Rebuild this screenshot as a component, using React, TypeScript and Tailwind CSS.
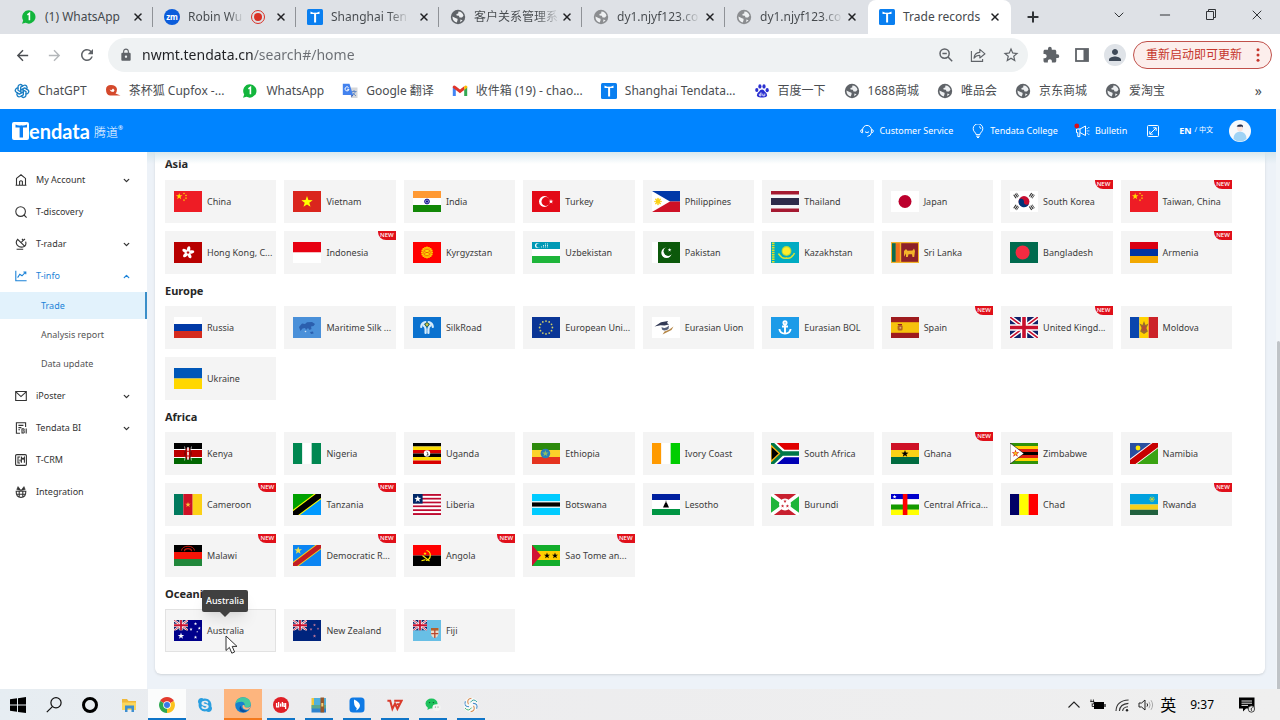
import type { ReactNode } from "react";
import clsx from "clsx";
import { ChevronDown, ChevronUp, Minus, Plus, X } from "lucide-react";
import {
  MdArrowBack,
  MdArrowForward,
  MdExtension,
  MdLock,
  MdPerson,
  MdRefresh,
  MdStarBorder,
} from "react-icons/md";
import { FaSkype } from "react-icons/fa";
import { TbBrandOpenai } from "react-icons/tb";

/* ---------- flags, all drawn on a 28x21 canvas ---------- */

function rows(...colors: string[]) {
  const h = 21 / colors.length;
  return colors.map((c, i) => (
    <rect key={i} y={i * h} width="28" height={h} fill={c} />
  ));
}

function cols(...colors: string[]) {
  const w = 28 / colors.length;
  return colors.map((c, i) => (
    <rect key={i} x={i * w} width={w} height="21" fill={c} />
  ));
}

function Star({ x, y, r, fill }: { x: number; y: number; r: number; fill: string }) {
  const points = Array.from({ length: 10 }, (_, i) => {
    const a = (Math.PI / 5) * i - Math.PI / 2;
    const d = i % 2 ? r * 0.4 : r;
    return `${x + d * Math.cos(a)},${y + d * Math.sin(a)}`;
  }).join(" ");
  return <polygon points={points} fill={fill} />;
}

function Ring({ x, y, r, n, dot, fill }: { x: number; y: number; r: number; n: number; dot: number; fill: string }) {
  return (
    <>
      {Array.from({ length: n }, (_, i) => {
        const a = (Math.PI * 2 * i) / n;
        return (
          <circle key={i} cx={x + r * Math.cos(a)} cy={y + r * Math.sin(a)} r={dot} fill={fill} />
        );
      })}
    </>
  );
}

function Jack() {
  return (
    <>
      <rect width="28" height="21" fill="#0f2168" />
      <path d="M0 0L28 21M28 0L0 21" stroke="#fff" strokeWidth="4.4" />
      <path d="M0 0L28 21M28 0L0 21" stroke="#c8102e" strokeWidth="1.6" />
      <path d="M14 0V21M0 10.5H28" stroke="#fff" strokeWidth="6.4" />
      <path d="M14 0V21M0 10.5H28" stroke="#c8102e" strokeWidth="3.6" />
    </>
  );
}

const smallJack = (
  <svg width="14" height="10.5" viewBox="0 0 28 21">
    <Jack />
  </svg>
);

const chinaFlag = (
  <>
    <rect width="28" height="21" fill="#ee1c25" />
    <Star x={5.2} y={5.4} r={3.4} fill="#ffde00" />
    <Star x={10} y={2.4} r={1.2} fill="#ffde00" />
    <Star x={12} y={4.4} r={1.2} fill="#ffde00" />
    <Star x={12} y={7.2} r={1.2} fill="#ffde00" />
    <Star x={10} y={9.2} r={1.2} fill="#ffde00" />
  </>
);

const flags: Record<string, ReactNode> = {
  cn: chinaFlag,
  vn: (
    <>
      {rows("#da251d")}
      <Star x={14} y={11} r={6} fill="#ff0" />
    </>
  ),
  in: (
    <>
      {rows("#ff9933", "#fff", "#128807")}
      <circle cx="14" cy="10.5" r="2.4" fill="#9a9ad2" stroke="#000088" strokeWidth="0.9" />
      <circle cx="14" cy="10.5" r="1" fill="#000088" />
    </>
  ),
  tr: (
    <>
      {rows("#e30a17")}
      <circle cx="12.4" cy="10.5" r="5.4" fill="#fff" />
      <circle cx="13.9" cy="10.5" r="4.4" fill="#e30a17" />
      <Star x={19} y={10.5} r={2.5} fill="#fff" />
    </>
  ),
  ph: (
    <>
      {rows("#0038a8", "#ce1126")}
      <path d="M0 0L18 10.5L0 21Z" fill="#fff" />
      <Ring x={6} y={10.5} r={3} n={8} dot={0.8} fill="#fcd116" />
      <circle cx="6" cy="10.5" r="2.4" fill="#fcd116" />
    </>
  ),
  th: (
    <>
      <rect width="28" height="21" fill="#a51931" />
      <rect y="3.5" width="28" height="14" fill="#f4f5f8" />
      <rect y="7" width="28" height="7" fill="#2d2a4a" />
    </>
  ),
  jp: (
    <>
      {rows("#fff")}
      <circle cx="14" cy="10.5" r="6.5" fill="#bc002d" />
    </>
  ),
  kr: (
    <>
      {rows("#fff")}
      <circle cx="14" cy="10.5" r="5.4" fill="#c60c30" />
      <path d="M8.7 9.6A5.4 5.4 0 1 0 19.3 11.6A2.7 2.7 0 0 1 14 10.5A2.7 2.7 0 0 0 8.7 9.6Z" fill="#003478" />
      <g stroke="#333" strokeWidth="4.2" strokeDasharray="1.2 0.6">
        <path d="M4.4 5.8L8 3.4" />
        <path d="M20 17.6L23.6 15.2" />
        <path d="M20 3.4L23.6 5.8" />
        <path d="M4.4 15.2L8 17.6" />
      </g>
    </>
  ),
  hk: (
    <>
      {rows("#b80000")}
      {[0, 72, 144, 216, 288].map((a) => (
        <ellipse key={a} cx="14" cy="7.3" rx="1.7" ry="3.1" fill="#fff" transform={`rotate(${a + 10} 14 10.5)`} />
      ))}
      <Star x={14} y={10.5} r={2} fill="#b80000" />
    </>
  ),
  id: rows("#e70011", "#fff"),
  kg: (
    <>
      {rows("#ff0000")}
      <Ring x={14} y={10.5} r={5} n={16} dot={1} fill="#ffd400" />
      <circle cx="14" cy="10.5" r="4.6" fill="#ffb400" />
      <circle cx="14" cy="10.5" r="3.2" fill="#ffd400" stroke="#e33d00" strokeWidth="0.5" />
      <path d="M11.5 9.5Q14 12 16.5 9.5M11.5 11.5Q14 9 16.5 11.5" stroke="#e33d00" strokeWidth="0.5" fill="none" />
    </>
  ),
  uz: (
    <>
      {rows("#0099b5", "#fff", "#1eb53a")}
      <circle cx="5.5" cy="3.5" r="2.5" fill="#fff" />
      <circle cx="6.5" cy="3.5" r="2.2" fill="#0099b5" />
      <path d="M9.5 4.5V6M11.5 3V6M13.5 1.5V6M15.5 1.5V6" stroke="#fff" strokeWidth="0.9" strokeDasharray="0.9 0.6" />
    </>
  ),
  pk: (
    <>
      {rows("#0c590b")}
      <rect width="6" height="21" fill="#fff" />
      <circle cx="14.5" cy="10.7" r="5.2" fill="#fff" />
      <circle cx="16.2" cy="9.3" r="4.6" fill="#0c590b" />
      <Star x={17.6} y={7.9} r={1.9} fill="#fff" />
    </>
  ),
  kz: (
    <>
      {rows("#00abc2")}
      <path d="M2.2 0.5V20.5" stroke="#e8e31a" strokeWidth="2.6" strokeDasharray="1.5 0.8" />
      <circle cx="15.5" cy="9" r="4.9" fill="#b9d93a" />
      <circle cx="15.5" cy="9" r="3.8" fill="#ffec2d" />
      <path d="M7.5 11.5Q11 17.5 15.5 16Q20 17.5 23.5 11" stroke="#d9e333" strokeWidth="1.5" fill="none" />
    </>
  ),
  lk: (
    <>
      {rows("#f2b32b")}
      <rect x="1" y="1.2" width="3.8" height="18.6" fill="#0b6b50" />
      <rect x="4.8" y="1.2" width="4" height="18.6" fill="#f0701c" />
      <rect x="10.2" y="1.2" width="16.8" height="18.6" fill="#8d2029" />
      <path d="M13 14.8V9L15 7L16.5 8.8L21.5 8.4L23 6.6L24 9L23.2 15H21.5L21 12.2H17.5L16.8 15H15V11.5Z" fill="#f2b32b" />
    </>
  ),
  bd: (
    <>
      {rows("#006a4e")}
      <circle cx="12.6" cy="10.5" r="7" fill="#f42a41" />
    </>
  ),
  am: rows("#d90012", "#0033a0", "#f2a800"),
  ru: rows("#fff", "#0039a6", "#d52b1e"),
  msilk: (
    <>
      {rows("#4a90d9")}
      <path d="M6 10L9 6.5L12 7L14 5.2L19 5L22 7L20.5 9L18 9.5L18.5 12L16.5 13L15 11L13 13L12 11L9.5 11.5L7.5 14Z" fill="#2b5fae" />
      <path d="M17 15L20 14.4L20.6 16.4L18 17Z" fill="#2b5fae" />
      <circle cx="12.5" cy="14.5" r="0.8" fill="#cfe3f7" />
    </>
  ),
  silk: (
    <>
      {rows("#0b72cf")}
      <g fill="none" stroke="#d6ecfb" strokeWidth="2.2" strokeLinecap="round">
        <path d="M12.4 5.2Q8.4 6 8.2 10M15.6 5.2Q19.6 6 19.8 10" />
        <path d="M10.4 8.2Q12.6 9.6 12.6 12V16M17.6 8.2Q15.4 9.6 15.4 12V16" />
      </g>
      <circle cx="14" cy="7.6" r="1.8" fill="#d7c84e" stroke="#2a5d2c" strokeWidth="0.8" />
    </>
  ),
  eu: (
    <>
      {rows("#0a3596")}
      <Ring x={14} y={10.5} r={6.4} n={12} dot={0.9} fill="#cfd06a" />
    </>
  ),
  eau: (
    <>
      {rows("#fff")}
      <path d="M2.5 9.5L9 5.2L16 4L15 6L17 7.5L12.5 8.6L8.5 8.3Z" fill="#333a55" />
      <path d="M9.5 10Q13.5 12.5 17 8.5L16.5 12Q13 14.5 10 12.5Z" fill="#56607a" />
      <path d="M21.5 9.5L19.5 13L14.5 15.5L10.5 17.6L12.5 14.6L17 12.8Z" fill="#b58748" />
    </>
  ),
  bol: (
    <>
      {rows("#1c9be8")}
      <g stroke="#fff" strokeWidth="1.9" fill="none">
        <circle cx="14" cy="5.8" r="1.6" />
        <path d="M14 7.5V16.5M11 9.5H17M8.4 12Q8.8 16.4 14 16.6Q19.2 16.4 19.6 12" />
      </g>
    </>
  ),
  es: (
    <>
      {rows("#9e1b1e")}
      <rect y="5.2" width="28" height="10.6" fill="#f6c20c" />
      <rect x="6.6" y="8" width="5" height="5.6" rx="1.5" fill="#b0621f" />
      <circle cx="9.4" cy="10.8" r="1" fill="#e0a780" />
      <path d="M6.8 7.5H11" stroke="#9e1b1e" strokeWidth="1" />
    </>
  ),
  gb: <Jack />,
  md: (
    <>
      {cols("#0a46ae", "#ffd200", "#cc2229")}
      <path d="M9.5 6.5L11.5 11L10.2 14.5L14 17L17.8 14.5L16.5 11L18.5 6.5L15.5 8L14 4L12.5 8Z" fill="#9c6b2c" />
      <rect x="12.3" y="9" width="3.4" height="4.6" fill="#b5473a" />
    </>
  ),
  ua: rows("#0057b8", "#ffd700"),
  ke: (
    <>
      {rows("#000", "#bb0000", "#006600")}
      <path d="M0 6.5H28M0 14.5H28" stroke="#fff" strokeWidth="1" />
      <path d="M10.5 3.5L12 10.5L10.5 17.5M17.5 3.5L16 10.5L17.5 17.5" stroke="#fff" strokeWidth="0.6" fill="none" />
      <ellipse cx="14" cy="10.5" rx="3" ry="6.3" fill="#bb0000" stroke="#000" strokeWidth="0.5" />
      <path d="M14 4.2V16.8" stroke="#fff" strokeWidth="1.6" strokeDasharray="3.6 1" />
    </>
  ),
  ng: cols("#008751", "#fff", "#008751"),
  ug: (
    <>
      {rows("#000", "#fcdc04", "#d90000", "#000", "#fcdc04", "#d90000")}
      <circle cx="14" cy="10.5" r="3.2" fill="#fff" />
      <path d="M13 8.5L14.5 10.5L13.2 12.8L15.6 12.2L15 9.6Z" fill="#555" />
    </>
  ),
  et: (
    <>
      {rows("#2d8a0c", "#fbd22a", "#e5331e")}
      <circle cx="13.4" cy="10.5" r="4.8" fill="#2b7fb8" />
      <Star x={13.4} y={10.5} r={3.4} fill="#8ebf65" />
    </>
  ),
  ci: cols("#ff9a00", "#fff", "#00cd00"),
  za: (
    <>
      {rows("#e00000", "#0000b5")}
      <path d="M0 0L12 10.5L0 21M11 10.5H28" stroke="#fff" strokeWidth="7.6" fill="none" />
      <path d="M0 0L11 10.5L0 21M11 10.5H28" stroke="#007749" strokeWidth="4.4" fill="none" />
      <path d="M0 2.5L8.5 10.5L0 18.5Z" fill="#000" stroke="#fcb514" strokeWidth="1.3" />
    </>
  ),
  gh: (
    <>
      {rows("#ce1126", "#fcd116", "#006b3f")}
      <Star x={14} y={10.8} r={3.8} fill="#000" />
    </>
  ),
  zw: (
    <>
      {rows("#319208", "#ffd200", "#de2010", "#000", "#de2010", "#ffd200", "#319208")}
      <path d="M0 0L14 10.5L0 21Z" fill="#fff" stroke="#000" strokeWidth="0.6" />
      <Star x={5.5} y={10.5} r={4} fill="#de2010" />
      <circle cx="5.5" cy="10.3" r="1.6" fill="#f3b81f" />
    </>
  ),
  na: (
    <>
      <path d="M0 0H28L0 21Z" fill="#2a4fa0" />
      <path d="M28 0V21H0Z" fill="#3aa312" />
      <path d="M-2 22.5L30 -1.5" stroke="#fff" strokeWidth="8.4" />
      <path d="M-2 22.5L30 -1.5" stroke="#c70000" strokeWidth="6.6" />
      <circle cx="8" cy="5" r="2.4" fill="#ffe700" />
    </>
  ),
  cm: (
    <>
      {cols("#007a5e", "#ce1126", "#fcd116")}
      <Star x={14} y={10.7} r={2.8} fill="#f7c33a" />
    </>
  ),
  tz: (
    <>
      <path d="M0 0H28L0 21Z" fill="#00a000" />
      <path d="M28 0V21H0Z" fill="#0099ff" />
      <path d="M-2 22.5L30 -1.5" stroke="#ff0" strokeWidth="8.4" />
      <path d="M-2 22.5L30 -1.5" stroke="#000" strokeWidth="6.2" />
    </>
  ),
  lr: (
    <>
      {rows("#bf0a30", "#fff", "#bf0a30", "#fff", "#bf0a30", "#fff", "#bf0a30", "#fff", "#bf0a30", "#fff", "#bf0a30")}
      <rect width="9.6" height="9.6" fill="#002868" />
      <Star x={4.8} y={5} r={3.6} fill="#fff" />
    </>
  ),
  bw: (
    <>
      {rows("#00cbff")}
      <rect y="7.2" width="28" height="6.6" fill="#fff" />
      <rect y="8.4" width="28" height="4.2" fill="#000" />
    </>
  ),
  ls: (
    <>
      <rect width="28" height="21" fill="#fff" />
      <rect width="28" height="6" fill="#00209f" />
      <rect y="15" width="28" height="6" fill="#009543" />
      <path d="M14 6L14.5 8.5L15.2 9.4L17 13.4H11L12.8 9.4L13.5 8.5Z" fill="#000" />
    </>
  ),
  bi: (
    <>
      <rect width="28" height="21" fill="#c8202f" />
      <path d="M0 0L14 10.5L0 21ZM28 0L14 10.5L28 21Z" fill="#1eb53a" />
      <path d="M0 0L28 21M28 0L0 21" stroke="#fff" strokeWidth="3.4" />
      <circle cx="14" cy="10.5" r="6" fill="#fff" />
      <Star x={14} y={7.4} r={1.8} fill="#c8202f" />
      <Star x={11.6} y={12} r={1.8} fill="#c8202f" />
      <Star x={16.4} y={12} r={1.8} fill="#c8202f" />
    </>
  ),
  cf: (
    <>
      {rows("#0000cc", "#fff", "#149a00", "#ffff00")}
      <rect x="11.8" width="4.6" height="21" fill="#f00" />
      <Star x={3.6} y={2.8} r={2.1} fill="#fff" />
    </>
  ),
  td: cols("#000066", "#ffff00", "#ff0000"),
  rw: (
    <>
      <rect width="28" height="10.5" fill="#00a1de" />
      <rect y="10.5" width="28" height="5.25" fill="#f5cf1b" />
      <rect y="15.75" width="28" height="5.25" fill="#20603d" />
      <Ring x={22} y={5.2} r={2.2} n={8} dot={0.6} fill="#c9d433" />
      <circle cx="22" cy="5.2" r="1.3" fill="#c9d433" />
    </>
  ),
  mw: (
    <>
      {rows("#000", "#f41408", "#21873b")}
      <path d="M7.5 5.6A6.5 4.4 0 0 1 20.5 5.6" fill="none" stroke="#c8160c" strokeWidth="1" />
      <path d="M10.5 6.2A3.5 2.6 0 0 1 17.5 6.2" fill="none" stroke="#c8160c" strokeWidth="1.3" />
    </>
  ),
  cd: (
    <>
      {rows("#0c85f2")}
      <path d="M-2 22.5L30 -1.5" stroke="#f7d618" strokeWidth="6.8" />
      <path d="M-2 22.5L30 -1.5" stroke="#c21c24" strokeWidth="5" />
      <Star x={5.2} y={5.6} r={4} fill="#f0e04a" />
    </>
  ),
  ao: (
    <>
      {rows("#f00", "#000")}
      <path d="M13.5 5.5A5 5 0 0 1 13 15.3" fill="none" stroke="#ffec00" strokeWidth="1.2" />
      <path d="M9.5 10.5L16.5 16M8.5 15.8L12.5 14.6" stroke="#ffec00" strokeWidth="1.1" />
      <Star x={12} y={8.6} r={1.8} fill="#ffec00" />
    </>
  ),
  st: (
    <>
      <rect width="28" height="21" fill="#12ad2b" />
      <rect y="6" width="28" height="9" fill="#ffce00" />
      <path d="M0 0L9 10.5L0 21Z" fill="#d21034" />
      <Star x={15} y={10.7} r={3.2} fill="#000" />
      <Star x={23} y={10.7} r={3.2} fill="#000" />
    </>
  ),
  au: (
    <>
      {rows("#00008b")}
      {smallJack}
      <Star x={7} y={16} r={3.4} fill="#fff" />
      <Star x={21.5} y={3.8} r={1.7} fill="#fff" />
      <Star x={17} y={9.3} r={1.7} fill="#fff" />
      <Star x={25.3} y={8.2} r={1.7} fill="#fff" />
      <Star x={21.5} y={17.4} r={1.8} fill="#fff" />
      <Star x={23.2} y={11.8} r={1} fill="#fff" />
    </>
  ),
  nz: (
    <>
      {rows("#00247d")}
      {smallJack}
      <Star x={21.5} y={5} r={1.6} fill="#c77a98" />
      <Star x={18} y={9.3} r={1.5} fill="#c77a98" />
      <Star x={25} y={8.6} r={1.4} fill="#c77a98" />
      <Star x={21.5} y={16} r={1.8} fill="#c77a98" />
    </>
  ),
  fj: (
    <>
      {rows("#68bfe5")}
      {smallJack}
      <path d="M18 8H25.5V14Q25 17 21.8 18Q18.5 17 18 14Z" fill="#e9dccb" />
      <path d="M18 8H25.5V10.6H18Z" fill="#b4602f" />
      <path d="M21.8 10V18M18.2 13.6H25.3" stroke="#b9472d" strokeWidth="1.3" />
    </>
  ),
};

/* ---------- country list ---------- */

type Country = { flag: string; name: string; isNew?: boolean };

const regions: { title: string; countries: Country[] }[] = [
  {
    title: "Asia",
    countries: [
      { flag: "cn", name: "China" },
      { flag: "vn", name: "Vietnam" },
      { flag: "in", name: "India" },
      { flag: "tr", name: "Turkey" },
      { flag: "ph", name: "Philippines" },
      { flag: "th", name: "Thailand" },
      { flag: "jp", name: "Japan" },
      { flag: "kr", name: "South Korea", isNew: true },
      { flag: "cn", name: "Taiwan, China", isNew: true },
      { flag: "hk", name: "Hong Kong, C..." },
      { flag: "id", name: "Indonesia", isNew: true },
      { flag: "kg", name: "Kyrgyzstan" },
      { flag: "uz", name: "Uzbekistan" },
      { flag: "pk", name: "Pakistan" },
      { flag: "kz", name: "Kazakhstan" },
      { flag: "lk", name: "Sri Lanka" },
      { flag: "bd", name: "Bangladesh" },
      { flag: "am", name: "Armenia", isNew: true },
    ],
  },
  {
    title: "Europe",
    countries: [
      { flag: "ru", name: "Russia" },
      { flag: "msilk", name: "Maritime Silk ..." },
      { flag: "silk", name: "SilkRoad" },
      { flag: "eu", name: "European Uni..." },
      { flag: "eau", name: "Eurasian Uion" },
      { flag: "bol", name: "Eurasian BOL" },
      { flag: "es", name: "Spain", isNew: true },
      { flag: "gb", name: "United Kingd...", isNew: true },
      { flag: "md", name: "Moldova" },
      { flag: "ua", name: "Ukraine" },
    ],
  },
  {
    title: "Africa",
    countries: [
      { flag: "ke", name: "Kenya" },
      { flag: "ng", name: "Nigeria" },
      { flag: "ug", name: "Uganda" },
      { flag: "et", name: "Ethiopia" },
      { flag: "ci", name: "Ivory Coast" },
      { flag: "za", name: "South Africa" },
      { flag: "gh", name: "Ghana", isNew: true },
      { flag: "zw", name: "Zimbabwe" },
      { flag: "na", name: "Namibia" },
      { flag: "cm", name: "Cameroon", isNew: true },
      { flag: "tz", name: "Tanzania", isNew: true },
      { flag: "lr", name: "Liberia" },
      { flag: "bw", name: "Botswana" },
      { flag: "ls", name: "Lesotho" },
      { flag: "bi", name: "Burundi" },
      { flag: "cf", name: "Central Africa..." },
      { flag: "td", name: "Chad" },
      { flag: "rw", name: "Rwanda", isNew: true },
      { flag: "mw", name: "Malawi", isNew: true },
      { flag: "cd", name: "Democratic R...", isNew: true },
      { flag: "ao", name: "Angola", isNew: true },
      { flag: "st", name: "Sao Tome an...", isNew: true },
    ],
  },
  {
    title: "Oceania",
    countries: [
      { flag: "au", name: "Australia" },
      { flag: "nz", name: "New Zealand" },
      { flag: "fj", name: "Fiji" },
    ],
  },
];

/* ---------- small logos ---------- */

function TLogo() {
  return (
    <svg className="size-4 shrink-0" viewBox="0 0 16 16">
      <rect width="16" height="16" rx="1.5" fill="#0a7ff0" />
      <path d="M3.5 2.6Q6 4.2 8 3.4Q10 4.2 12.5 2.6V5H9.1V13.4H7.1V5H3.5Z" fill="#fff" />
    </svg>
  );
}

function WhatsAppLogo() {
  return (
    <svg className="size-4 shrink-0" viewBox="0 0 16 16">
      <path d="M8 1.2A6.7 6.7 0 1 1 4.6 13.8L1 14.8L2.2 11.4A6.7 6.7 0 0 1 8 1.2Z" fill="#12b53c" />
      <path d="M6.4 5.8L8.4 4.4V11.2" stroke="#fff" strokeWidth="1.6" fill="none" />
    </svg>
  );
}

function ZoomLogo() {
  return (
    <span className="flex size-4 shrink-0 items-center justify-center rounded-full bg-[#0b5cdb] text-[8px] leading-none font-bold text-white">
      zm
    </span>
  );
}

function Globe({ light }: { light?: boolean }) {
  return (
    <svg className={clsx("size-4 shrink-0", light ? "text-[#8b8d90]" : "text-[#5f6368]")} viewBox="0 0 16 16">
      <circle cx="8" cy="8" r="7.2" fill="currentColor" />
      <path
        d="M2.4 7.4L6 9.2Q8.2 9.4 7.6 11L6.8 13.6Q2.6 12.4 2.4 7.4ZM8.4 2.4Q12.6 2.6 13.5 6.8L12 8.6L9.6 8.4L8.8 6.8L6.6 6.6L6.4 5L8.2 4.4ZM10.4 10.4L12.6 11.2L10.2 13.2Z"
        fill="#eef0f2"
      />
    </svg>
  );
}

function FoxLogo() {
  return (
    <svg className="size-4 shrink-0" viewBox="0 0 16 16">
      <path d="M1 6.5Q1 2 6 2Q11 2 12 6Q12 9 10.5 10.5L15.5 12.4H5Q1 12 1 6.5Z" fill="#d4492c" />
      <path d="M4.6 6.4L6.4 7.2L8 5.6L9.6 7.2L8.4 9L6 8.6Z" fill="#fff" />
    </svg>
  );
}

function TranslateLogo() {
  return (
    <svg className="size-4 shrink-0" viewBox="0 0 16 16">
      <path d="M6 4.5H15.5V15H9.5Z" fill="#d5d7da" />
      <path d="M9.5 8.5H14.5M12 7V8.5M10 13L13.5 8.8M10.8 10L14 13" stroke="#5a83c4" strokeWidth="0.9" />
      <path d="M0.8 0.8H7.5L11 12H0.8Z" fill="#4382ee" />
      <path d="M9.3 12H11L9.4 14.8Z" fill="#2b55b5" />
      <path d="M6.6 4.6A2 2 0 1 0 7 6.3H5.2" stroke="#fff" strokeWidth="1" fill="none" />
    </svg>
  );
}

function GmailLogo() {
  return (
    <svg className="size-4 shrink-0" viewBox="0 0 16 16">
      <path d="M0.8 4V13H3.8V6Z" fill="#4285f4" />
      <path d="M15.2 4V13H12.2V6Z" fill="#34a853" />
      <path d="M0.8 3.4Q2 1.6 3.8 3.2L8 6.5L12.2 3.2V7L8 10.2L3.8 7L0.8 4.8Z" fill="#e0352b" />
      <path d="M12.2 3.2Q14 1.6 15.2 3.4V4.8L12.2 7Z" fill="#fbbc04" />
    </svg>
  );
}

function BaiduLogo() {
  return (
    <svg className="size-4 shrink-0" viewBox="0 0 16 16" fill="#2a2fd0">
      <ellipse cx="2.8" cy="7" rx="1.6" ry="2.1" />
      <ellipse cx="5.9" cy="3.4" rx="1.6" ry="2.2" />
      <ellipse cx="10" cy="3.4" rx="1.6" ry="2.2" />
      <ellipse cx="13.2" cy="7.2" rx="1.6" ry="2.1" />
      <path d="M8 6.6Q9.8 6.6 10.8 8.6Q13.6 10.6 13 13Q12.4 14.8 8 14.4Q3.6 14.8 3 13Q2.4 10.6 5.2 8.6Q6.2 6.6 8 6.6Z" />
      <path d="M7 9.4V12.8H5.6Q4.8 12 5.6 11H7M8.8 10.6V12.8H10.8V10.6" fill="none" stroke="#fff" strokeWidth="0.8" />
    </svg>
  );
}

function TendataLogo() {
  return (
    <a href="#/home" className="flex items-center text-white">
      <svg className="h-[18px] w-[17px]" viewBox="0 0 17 18">
        <rect width="17" height="18" rx="2" fill="#fff" />
        <path d="M3.5 2.4Q6.6 4.2 9.3 3.2Q12 4.2 15 2.4V5.4H11V15.6H7.6V5.4H3.5Z" fill="#0a80f5" />
      </svg>
      <span className="font-[Lato] text-xl leading-5 font-bold">endata</span>
      <span className="mt-1 ml-1 text-[12px] leading-4 font-light">腾道</span>
      <sup className="text-[6px]">®</sup>
    </a>
  );
}

/* ---------- browser window ---------- */

const tabs: { icon: ReactNode; title: string; recording?: boolean; active?: boolean }[] = [
  { icon: <WhatsAppLogo />, title: "(1) WhatsApp" },
  { icon: <ZoomLogo />, title: "Robin Wu", recording: true },
  { icon: <TLogo />, title: "Shanghai Ten" },
  { icon: <Globe />, title: "客户关系管理系" },
  { icon: <Globe light />, title: "dy1.njyf123.co" },
  { icon: <Globe light />, title: "dy1.njyf123.co" },
  { icon: <TLogo />, title: "Trade records", active: true },
];

function TabStrip() {
  return (
    <div className="flex h-[34px] shrink-0 bg-[#dee1e6] pl-[10px] text-[12px] text-[#45494d]">
      {tabs.map((tab, i) => (
        <div
          key={i}
          className={clsx(
            "flex w-[143px] shrink-0 items-center pr-2.5 pl-[11px]",
            tab.active && "rounded-t-lg bg-white",
          )}
        >
          {tab.icon}
          <span
            className={clsx(
              "ml-2 whitespace-nowrap",
              i > 0 &&
                !tab.active &&
                "bg-linear-to-r from-[#45494d] from-75% to-[#cdd0d4] bg-clip-text text-transparent",
            )}
          >
            {tab.title}
          </span>
          {tab.recording && (
            <span className="mr-1.5 ml-auto flex size-3.5 shrink-0 items-center justify-center rounded-full border border-[#d93025]">
              <span className="size-2 rounded-full bg-[#d93025]" />
            </span>
          )}
          <button
            type="button"
            aria-label="Close tab"
            className={clsx("shrink-0 text-[#202124]", tab.recording ? "ml-1" : "ml-auto")}
          >
            <X className="size-3" strokeWidth={3} />
          </button>
          {i < 5 && <span className="-mr-2.5 ml-2 h-5 w-px shrink-0 bg-[#8f9297]" />}
        </div>
      ))}
      <button type="button" aria-label="New tab" className="ml-3.5 text-[#303336]">
        <Plus className="size-4" strokeWidth={3} />
      </button>
      <div className="ml-auto flex items-start gap-[30px] pt-[7px] pr-[15px] text-[#303336]">
        <button type="button" aria-label="Search tabs">
          <ChevronDown className="size-4" strokeWidth={1.5} />
        </button>
        <button type="button" aria-label="Minimize">
          <Minus className="size-4" strokeWidth={1.5} />
        </button>
        <button type="button" aria-label="Restore">
          <svg className="size-4" viewBox="0 0 16 16" fill="none" stroke="currentColor">
            <path d="M3.5 4.5H10.5V12.5H3.5ZM5.5 4.5V2.5H12.5V10.5H10.5" />
          </svg>
        </button>
        <button type="button" aria-label="Close window">
          <X className="size-4" strokeWidth={1.5} />
        </button>
      </div>
    </div>
  );
}

function Toolbar() {
  return (
    <div className="flex h-[42px] shrink-0 items-center bg-white pr-2 pl-3.5 text-[#5f6368]">
      <div className="flex gap-[15px]">
        <button type="button" aria-label="Back" className="text-[#4a4d51]">
          <MdArrowBack className="size-[17px]" />
        </button>
        <button type="button" aria-label="Forward" className="text-[#b4b7ba]">
          <MdArrowForward className="size-[17px]" />
        </button>
        <button type="button" aria-label="Reload">
          <MdRefresh className="size-[18px]" />
        </button>
      </div>
      <div className="ml-3 flex h-[34px] flex-1 items-center rounded-full bg-[#eff2f3] pr-2 pl-[11px]">
        <MdLock className="size-3.5 shrink-0" />
        <input
          aria-label="Address"
          defaultValue="nwmt.tendata.cn/search#/home"
          className="ml-[9px] min-w-0 flex-1 bg-[linear-gradient(90deg,#202124_112px,#6a6e73_112px)] bg-clip-text text-sm text-transparent outline-none"
        />
        <div className="flex gap-4">
          <button type="button" aria-label="Zoom">
            <svg className="size-4" viewBox="0 0 16 16" fill="none" stroke="currentColor" strokeWidth="1.5">
              <circle cx="6.6" cy="6.6" r="4.6" />
              <path d="M10 10L14.2 14.2M4.4 6.6H8.8" />
            </svg>
          </button>
          <button type="button" aria-label="Share">
            <svg className="size-4" viewBox="0 0 16 16" fill="none" stroke="currentColor" strokeWidth="1.1">
              <path d="M1.4 4V14.4H12.6V12" />
              <path d="M4 11.2Q4.4 5.8 9.8 5.4V2.4L15 6.8L9.8 11V8.2Q6 8.2 4 11.2Z" strokeLinejoin="round" />
            </svg>
          </button>
          <button type="button" aria-label="Bookmark this page">
            <MdStarBorder className="size-[18px]" />
          </button>
        </div>
      </div>
      <div className="ml-3.5 flex items-center gap-3.5">
        <button type="button" aria-label="Extensions">
          <MdExtension className="size-[18px]" />
        </button>
        <button type="button" aria-label="Side panel">
          <svg className="size-4" viewBox="0 0 16 16">
            <rect x="2" y="2" width="12" height="12" fill="none" stroke="currentColor" strokeWidth="1.8" />
            <rect x="9.5" y="2" width="4.5" height="12" fill="currentColor" />
          </svg>
        </button>
        <button
          type="button"
          aria-label="Profile"
          className="flex size-[22px] items-center justify-center rounded-full bg-[#dfe3e8] text-[#3f4a58]"
        >
          <MdPerson className="size-[18px]" />
        </button>
      </div>
      <button
        type="button"
        className="ml-[7px] flex h-7 items-center rounded-full border border-[#c0504a] bg-[#fceeec] pr-[9px] pl-3 text-[12px] text-[#c5362c]"
      >
        重新启动即可更新
        <svg className="ml-3 h-4 w-2" viewBox="0 0 8 16" fill="currentColor">
          <circle cx="4" cy="2.8" r="1.5" />
          <circle cx="4" cy="8" r="1.5" />
          <circle cx="4" cy="13.2" r="1.5" />
        </svg>
      </button>
    </div>
  );
}

const bookmarks: { icon: ReactNode; title: string }[] = [
  { icon: <TbBrandOpenai className="size-4 shrink-0 text-[#1c7fc4]" />, title: "ChatGPT" },
  { icon: <FoxLogo />, title: "茶杯狐 Cupfox -..." },
  { icon: <WhatsAppLogo />, title: "WhatsApp" },
  { icon: <TranslateLogo />, title: "Google 翻译" },
  { icon: <GmailLogo />, title: "收件箱 (19) - chao..." },
  { icon: <TLogo />, title: "Shanghai Tendata..." },
  { icon: <BaiduLogo />, title: "百度一下" },
  { icon: <Globe />, title: "1688商城" },
  { icon: <Globe />, title: "唯品会" },
  { icon: <Globe />, title: "京东商城" },
  { icon: <Globe />, title: "爱淘宝" },
];

function BookmarksBar() {
  return (
    <nav className="flex h-[33px] shrink-0 items-center gap-[18px] bg-white pr-[18px] pb-1 pl-3.5 text-[12px] whitespace-nowrap text-[#4a4d51]">
      {bookmarks.map((b) => (
        <a key={b.title} href="#" className="flex items-center gap-2">
          {b.icon}
          {b.title}
        </a>
      ))}
      <button type="button" aria-label="More bookmarks" className="ml-auto text-sm">
        »
      </button>
    </nav>
  );
}

/* ---------- site ---------- */

function Header() {
  return (
    <header className="flex h-[43px] shrink-0 items-center bg-[#0084ff] pr-[25px] pl-3 text-white">
      <TendataLogo />
      <nav className="ml-auto flex items-center">
        <a href="#" className="mr-[18px] flex items-center gap-[5px]">
          <svg className="size-3.5" viewBox="0 0 14 14" fill="none" stroke="currentColor" strokeWidth="1">
            <path d="M2.6 8.6V5.8A4.4 4.4 0 0 1 11.4 5.8V8.6Q11 12 7.4 12.4M2.6 5.4Q0.6 5.6 0.7 7.2Q0.8 8.8 2.6 8.8M11.4 5.4Q13.4 5.6 13.3 7.2Q13.2 8.8 11.4 8.8M5 7.8Q7 9.4 9 7.8" />
          </svg>
          Customer Service
        </a>
        <a href="#" className="mr-4 flex items-center gap-[5px]">
          <svg className="size-3.5" viewBox="0 0 14 14" fill="none" stroke="currentColor" strokeWidth="1">
            <path d="M5 10.6Q5 9.2 3.4 7.8A4.8 4.8 0 1 1 10.6 7.8Q9 9.2 9 10.6ZM5.2 12.2H8.8M6 13.5H8M8 2.6Q9.6 3.2 9.8 4.8" />
          </svg>
          Tendata College
        </a>
        <a href="#" className="mr-5 flex items-center gap-[5px]">
          <svg className="size-4" viewBox="0 0 16 16" fill="none" stroke="currentColor" strokeWidth="1">
            <path d="M2.5 6H6L11.5 3V12.5L6 9.6H5.8V13.6H3.8V9.6H2.5ZM6 6V9.6M13.2 5V6M13.2 7.4V8.4M13.2 9.8V10.8M14.8 4V5M14.8 7.4V8.4M14.8 10.8V11.8" />
            <circle cx="2.8" cy="3" r="2.4" fill="#d9101c" stroke="none" />
          </svg>
          Bulletin
        </a>
        <button type="button" aria-label="Full screen" className="mr-5">
          <svg className="size-3" viewBox="0 0 12 12" fill="none" stroke="currentColor" strokeWidth="1">
            <rect x="0.5" y="0.5" width="11" height="11" rx="1" />
            <path d="M3 9L9 3M6.2 2.8H9.2V5.8M2.8 6.2V9.2H5.8" />
          </svg>
        </button>
        <button type="button" className="mr-4 flex items-center gap-[3px] font-bold">
          EN <span className="text-[7px] font-normal">/ 中文</span>
        </button>
        <svg className="size-[22px]" viewBox="0 0 22 22">
          <circle cx="11" cy="11" r="11" fill="#f6f9fc" />
          <path d="M4.5 19Q4.5 12 11 11.5Q17.5 12 17.5 19Q11 24 4.5 19Z" fill="#9fd3f5" />
          <circle cx="11" cy="8.4" r="2.9" fill="#fbe3dc" />
          <path d="M7.6 6.6Q8.6 4.2 11.8 4.6Q14.4 4.8 14 7.6L13 6.4Q10 7 7.6 6.6Z" fill="#232c4a" />
        </svg>
      </nav>
    </header>
  );
}

function LineIcon({ children }: { children: ReactNode }) {
  return (
    <svg className="size-3 shrink-0" viewBox="0 0 12 12" fill="none" stroke="currentColor" strokeWidth="1.1">
      {children}
    </svg>
  );
}

type MenuEntry = { label: string; icon: ReactNode; arrow?: boolean; open?: boolean };

const menu: MenuEntry[] = [
  {
    label: "My Account",
    arrow: true,
    icon: (
      <LineIcon>
        <path d="M1.5 4.4L6 0.8L10.5 4.4V11.2H1.5ZM0.6 11.2H11.4M4.6 11V7.4Q6 6.2 7.4 7.4V11" />
      </LineIcon>
    ),
  },
  {
    label: "T-discovery",
    icon: (
      <LineIcon>
        <circle cx="5.6" cy="5.6" r="4.8" />
        <path d="M9 9L11.6 11.6" />
      </LineIcon>
    ),
  },
  {
    label: "T-radar",
    arrow: true,
    icon: (
      <LineIcon>
        <path d="M2.6 1.4Q0 4.4 2.4 7.4Q5.6 10.4 9.6 8.2ZM5.8 4.8L8 2.6M7 0.8L8.2 2.4L10 1M10.6 3.6Q11.6 6.6 9.6 8.2M1.6 11.2H8.2" />
      </LineIcon>
    ),
  },
  {
    label: "T-info",
    arrow: true,
    open: true,
    icon: (
      <LineIcon>
        <path d="M0.8 0.8V10.8H11.6M2.6 7.6L4.8 4.2L7 5.8L10.6 2.2M8.4 2H10.8V4.2" />
      </LineIcon>
    ),
  },
  {
    label: "iPoster",
    arrow: true,
    icon: (
      <LineIcon>
        <path d="M0.7 1.5H11.3V10.5H0.7ZM0.9 1.8L6 6.6L11.1 1.8" />
      </LineIcon>
    ),
  },
  {
    label: "Tendata BI",
    arrow: true,
    icon: (
      <LineIcon>
        <path d="M10.6 5V0.8H1.4V11.2H5M3.4 3.4H8.4M3.4 5.6H6.4M3.4 7.8H5M7 6.6V11H8.6Q9.8 10.6 8.8 8.8Q9.6 7 8.4 6.8H7M11.2 6.6V11.4" />
      </LineIcon>
    ),
  },
  {
    label: "T-CRM",
    icon: (
      <LineIcon>
        <rect x="0.6" y="0.6" width="10.8" height="10.8" rx="1.2" />
        <path d="M5 3H3V9H5M6.4 8.8V3.4L8 5.4L9.4 3.4V8.8M5 5.5V7.5" />
      </LineIcon>
    ),
  },
  {
    label: "Integration",
    icon: (
      <LineIcon>
        <path d="M1.2 5.2H10.8Q11 11.4 6 11.4Q1 11.4 1.2 5.2ZM1.4 8.2H10.6M4.2 5.2V11M7.8 5.2V11" />
        <path d="M6 4.4L3 0.6L1.8 3.6ZM6 4.4L9 0.6L10.2 3.6Z" fill="currentColor" strokeWidth="0.6" />
      </LineIcon>
    ),
  },
];

function Sidebar() {
  return (
    <aside className="w-[147px] shrink-0 bg-white pt-3 text-[#333]">
      {menu.map((m) => (
        <div key={m.label}>
          <a
            href="#"
            className={clsx("flex h-8 items-center pr-4 pl-[15px]", m.open && "text-[#1c83d8]")}
          >
            {m.icon}
            <span className="ml-[9px] flex-1">{m.label}</span>
            {m.arrow &&
              (m.open ? (
                <ChevronUp className="size-[9px]" strokeWidth={3.5} />
              ) : (
                <ChevronDown className="size-[9px]" strokeWidth={3.5} />
              ))}
          </a>
          {m.open && (
            <div className="flex flex-col gap-0.5 pb-[3px] text-[#555]">
              <a
                href="#/trade"
                className="flex h-[27px] items-center border-r-2 border-[#3b8fc9] bg-[#e2f2fc] pl-[41px] text-[#1c83d8]"
              >
                Trade
              </a>
              <a href="#/report" className="flex h-[27px] items-center pl-[41px]">
                Analysis report
              </a>
              <a href="#/update" className="flex h-[27px] items-center pl-[41px]">
                Data update
              </a>
            </div>
          )}
        </div>
      ))}
    </aside>
  );
}

function Tooltip({ text }: { text: string }) {
  return (
    <div
      role="tooltip"
      className="absolute bottom-[calc(100%-3px)] left-[37px] z-10 rounded-xs bg-[#404040] px-1 py-1 leading-[14px] font-medium text-white shadow-lg"
    >
      {text}
      <span className="absolute top-full left-1/2 -translate-x-1/2 border-x-[5px] border-t-[5px] border-x-transparent border-t-[#404040]" />
    </div>
  );
}

function Pointer() {
  return (
    <svg className="absolute top-[26px] left-[60px] z-10 h-[20px] w-[14px]" viewBox="0 0 14 20">
      <path
        d="M1 1V15.5L4.4 12.4L6.8 18.2L9.6 17L7.2 11.4H12Z"
        fill="#fff"
        stroke="#333"
        strokeWidth="1"
      />
    </svg>
  );
}

function CountryCard({ country, hovered }: { country: Country; hovered?: boolean }) {
  return (
    <div className="relative">
      <button
        type="button"
        className={clsx(
          "flex h-[43px] w-full items-center gap-[5px] border pl-2 whitespace-nowrap text-[#3c3c3c]",
          hovered ? "border-[#e2e2e2] bg-[#f5f5f5]" : "border-[#f4f4f4] bg-[#f4f4f4]",
        )}
      >
        <svg className="h-[21px] w-7 shrink-0" viewBox="0 0 28 21">
          {flags[country.flag]}
        </svg>
        {country.name}
      </button>
      {country.isNew && (
        <span className="absolute top-0 right-0 h-[9px] w-[18px] rounded-bl-lg bg-[#e0101a] text-center text-[6px] leading-[9px] font-medium text-white">
          NEW
        </span>
      )}
      {hovered && <Tooltip text={country.name} />}
      {hovered && <Pointer />}
    </div>
  );
}

function Countries() {
  return (
    <main className="relative flex-1 overflow-hidden bg-[#edf2f8] pr-[11px] pl-2">
      <div className="rounded-b-md bg-white pr-[33px] pb-[22px] pl-2.5 shadow-sm">
        {regions.map((r, i) => (
          <section key={r.title}>
            <h2
              className={clsx(
                "text-[11px] font-bold text-[#262626]",
                i === 0 ? "h-7 leading-6" : "h-8 leading-[34px]",
              )}
            >
              {r.title}
            </h2>
            <div className="grid grid-cols-9 gap-2">
              {r.countries.map((c) => (
                <CountryCard key={c.name} country={c} hovered={c.name === "Australia"} />
              ))}
            </div>
          </section>
        ))}
      </div>
      <div className="pointer-events-none absolute inset-x-0 top-0 h-3 bg-linear-to-b from-[#cfe3ea]/80 to-transparent" />
    </main>
  );
}

/* ---------- taskbar ---------- */

const apps: { name: string; icon: ReactNode; look?: "active" | "alert" | "running" }[] = [
  {
    name: "File Explorer",
    icon: (
      <>
        <path d="M1 2H6L7.5 4H15V13H1Z" fill="#f0b93a" />
        <path d="M1 5.5H15V13H1Z" fill="#fbd75e" />
        <path d="M4 15V8.5H13V15H10.5V11.5H6.5V15Z" fill="#3d8fd1" />
      </>
    ),
  },
  {
    name: "Chrome",
    look: "active",
    icon: (
      <>
        <path d="M8 8L1.1 4A8 8 0 0 1 14.9 4Z" fill="#e33b2e" />
        <path d="M8 8L1.1 4A8 8 0 0 0 8 16Z" fill="#2da94f" />
        <path d="M8 8L14.9 4A8 8 0 0 1 8 16Z" fill="#fcc31e" />
        <circle cx="8" cy="8" r="3.8" fill="#fff" />
        <circle cx="8" cy="8" r="3" fill="#3a78e8" />
      </>
    ),
  },
  { name: "Skype", icon: null },
  {
    name: "Edge",
    look: "alert",
    icon: (
      <>
        <circle cx="8" cy="8" r="7.8" fill="#1781cf" />
        <path d="M0.5 6.5Q2 0.2 8.4 0.2Q15.6 0.8 15.8 7Q15.4 10.6 11.4 10.6Q9 10.4 9.8 8.8Q10 5 6.2 4.8Q2.6 4.8 0.5 6.5Z" fill="#45c9a0" />
        <path d="M5.8 8.8Q6 14 12.5 13.6Q9.5 16.4 6 14.6Q3 12 5.8 8.8Z" fill="#0b4f9e" />
        <path d="M9.8 8.8Q9 10.4 11.4 10.6Q14 10.6 15.4 9.4Q14.6 12.8 11 12.8Q7.2 12 7.4 9Q8 7 9.8 8.8Z" fill="#fdb57e" />
      </>
    ),
  },
  {
    name: "Youdao",
    look: "running",
    icon: (
      <>
        <circle cx="8" cy="8" r="8" fill="#e01f26" />
        <path d="M3.6 6V9.8H5.6V5V9.8M7.6 6.4V9.8M9.4 5V9.8M11 6V9.4H12.6V6M12.6 9V12" stroke="#fff" strokeWidth="1.3" fill="none" />
      </>
    ),
  },
  {
    name: "Archive",
    look: "running",
    icon: (
      <>
        <rect x="0.5" y="1" width="6" height="10" fill="#f2c838" />
        <rect x="3" y="1" width="12" height="8" fill="#4fb0dc" />
        <rect x="0.5" y="8" width="14.5" height="4" fill="#5aa890" />
        <rect x="0.5" y="11.5" width="14.5" height="4" fill="#2f83cf" />
        <rect x="9.5" y="0.5" width="3.6" height="15" fill="#98582a" />
        <rect x="10.3" y="6" width="2" height="3.5" fill="#f1d27b" />
      </>
    ),
  },
  {
    name: "Dingtalk",
    look: "running",
    icon: (
      <>
        <rect x="0.5" y="0.5" width="15" height="15" rx="3.5" fill="#0f7ae5" />
        <path d="M5 2.6Q10.6 5 11 8.4Q10.8 11.4 7.2 13.6L7.8 11.2Q4.4 9 5 2.6Z" fill="#fff" />
      </>
    ),
  },
  {
    name: "WPS",
    look: "running",
    icon: (
      <path
        d="M0.4 3.8H3.2L5.4 12L8 6.6L10.4 12L14.6 3.8H7.2M9.6 7.2H12.2"
        stroke="#d93a2b"
        strokeWidth="2"
        fill="none"
      />
    ),
  },
  {
    name: "WeChat",
    look: "running",
    icon: (
      <>
        <ellipse cx="6.5" cy="6.6" rx="6" ry="5" fill="#1ec25d" />
        <path d="M3 10L2.4 13L6 11Z" fill="#1ec25d" />
        <ellipse cx="11.6" cy="10.6" rx="4.2" ry="3.4" fill="#f3f5f3" />
        <circle cx="4.6" cy="5.6" r="0.7" fill="#0b5c2a" />
        <circle cx="8.4" cy="5.6" r="0.7" fill="#0b5c2a" />
        <circle cx="10.4" cy="10" r="0.6" fill="#777" />
        <circle cx="13" cy="10" r="0.6" fill="#777" />
      </>
    ),
  },
  {
    name: "Meeting",
    look: "running",
    icon: (
      <g fill="none" strokeWidth="1">
        <circle cx="8" cy="8" r="7.4" fill="#f7f9f8" />
        {["#3aa6a0", "#3d86c9", "#d8884a", "#4bb878", "#3d86c9", "#d8884a"].map((c, i) => (
          <path key={i} d="M7.4 5.4Q10.6 0.8 14 5" stroke={c} transform={`rotate(${i * 60} 8 8)`} />
        ))}
      </g>
    ),
  },
];

function Taskbar() {
  return (
    <footer className="flex h-[31px] shrink-0 items-stretch bg-linear-to-r from-[#e6edf2] via-[#ececee] via-20% to-[#efefef] text-black">
      <button type="button" aria-label="Start" className="flex w-9 items-center justify-center">
        <svg className="size-4" viewBox="0 0 16 16">
          <path d="M0 2.3L7 1.3V7.6H0ZM8 1.2L16 0V7.6H8ZM0 8.5H7V14.8L0 13.8ZM8 8.5H16V16L8 14.9Z" />
        </svg>
      </button>
      <button type="button" aria-label="Search" className="flex w-9 items-center justify-center">
        <svg className="size-4" viewBox="0 0 16 16" fill="none" stroke="#111" strokeWidth="1.2">
          <circle cx="10" cy="5.8" r="5.1" />
          <path d="M6.4 9.6L0.8 15.2" />
        </svg>
      </button>
      <button type="button" aria-label="Cortana" className="mr-0.5 flex w-9 items-center justify-center">
        <span className="size-4 rounded-full border-[3px] border-black" />
      </button>
      {apps.map((app) => (
        <button
          key={app.name}
          type="button"
          aria-label={app.name}
          className={clsx(
            "flex w-[38px] flex-col items-center",
            app.look === "active" && "bg-[#fbfcfc]",
            app.look === "alert" && "bg-[#fdb57e]",
          )}
        >
          <span className="flex flex-1 items-center pt-0.5">
            {app.icon ? (
              <svg className="size-4" viewBox="0 0 16 16">
                {app.icon}
              </svg>
            ) : (
              <FaSkype className="size-4 text-[#2a9fe0]" />
            )}
          </span>
          <span
            className={clsx(
              "h-0.5",
              app.look === "running" && "w-7 bg-[#0f75c8]",
              app.look === "active" && "w-full bg-[#0f75c8]",
              app.look === "alert" && "w-full bg-[#f47a1c]",
            )}
          />
        </button>
      ))}
      <div className="ml-auto flex items-center pr-[25px]">
        <svg className="mr-2 size-4" viewBox="0 0 16 16" fill="none" stroke="#222" strokeWidth="1.1">
          <path d="M2.5 10.5L8 5L13.5 10.5" />
        </svg>
        <svg className="mr-2 size-4" viewBox="0 0 16 16">
          <path d="M4 5H14V12H4ZM14.4 7H15.6V10H14.4Z" />
          <path d="M1 2.5V5M3.4 2.5V5M0.4 4.6H4V6.4Q2.2 8 2.2 6.6V9.5H4" stroke="#000" fill="none" strokeWidth="0.8" />
        </svg>
        <svg className="mr-2 size-4" viewBox="0 0 16 16" fill="none" stroke="#333" strokeWidth="1.1">
          <path d="M2 14Q2.4 3.6 14.6 3M5.4 14Q6 7 14.4 6.4M8.6 14Q9 10.2 14 9.8" />
          <circle cx="13" cy="13.2" r="1.2" fill="#222" stroke="none" />
        </svg>
        <svg className="mr-1.5 size-4" viewBox="0 0 16 16" fill="none" stroke="#222">
          <path d="M1 6H3.6L7 3V13L3.6 10H1Z" />
          <path d="M9 6.4Q10.2 8 9 9.6" />
          <path d="M11 4.8Q13.2 8 11 11.2M13 3.2Q16.2 8 13 12.8" stroke="#aaa" />
        </svg>
        <span className="text-base">英</span>
        <time className="ml-3.5 text-[12px]">9:37</time>
        <svg className="ml-6 size-[17px]" viewBox="0 0 17 17">
          <path d="M1 1.5H16.5V12.5H8L5 15.5V12.5H1Z" />
          <path d="M3.5 5H14M3.5 7.2H14M3.5 9.4H10" stroke="#fff" strokeWidth="0.9" />
          <circle cx="13.4" cy="13" r="3.2" fill="#e8e8e8" stroke="#222" strokeWidth="0.8" />
          <path d="M14.6 11.4Q12 12.4 13.6 14.8" stroke="#222" fill="none" strokeWidth="0.9" />
        </svg>
      </div>
    </footer>
  );
}

export default function App() {
  return (
    <div className="flex h-screen flex-col overflow-hidden font-['Noto_Sans','Noto_Sans_CJK_SC',sans-serif]">
      <TabStrip />
      <Toolbar />
      <BookmarksBar />
      <div className="flex min-h-0 flex-1 text-[9px]">
        <div className="flex min-w-0 flex-1 flex-col">
          <Header />
          <div className="flex min-h-0 flex-1">
            <Sidebar />
            <Countries />
          </div>
        </div>
        <div className="flex w-1 flex-col justify-end bg-[#f1f5f9] pl-px">
          <div className="h-3/5 rounded-t-sm bg-[#bfc3c7]" />
        </div>
      </div>
      <Taskbar />
    </div>
  );
}
